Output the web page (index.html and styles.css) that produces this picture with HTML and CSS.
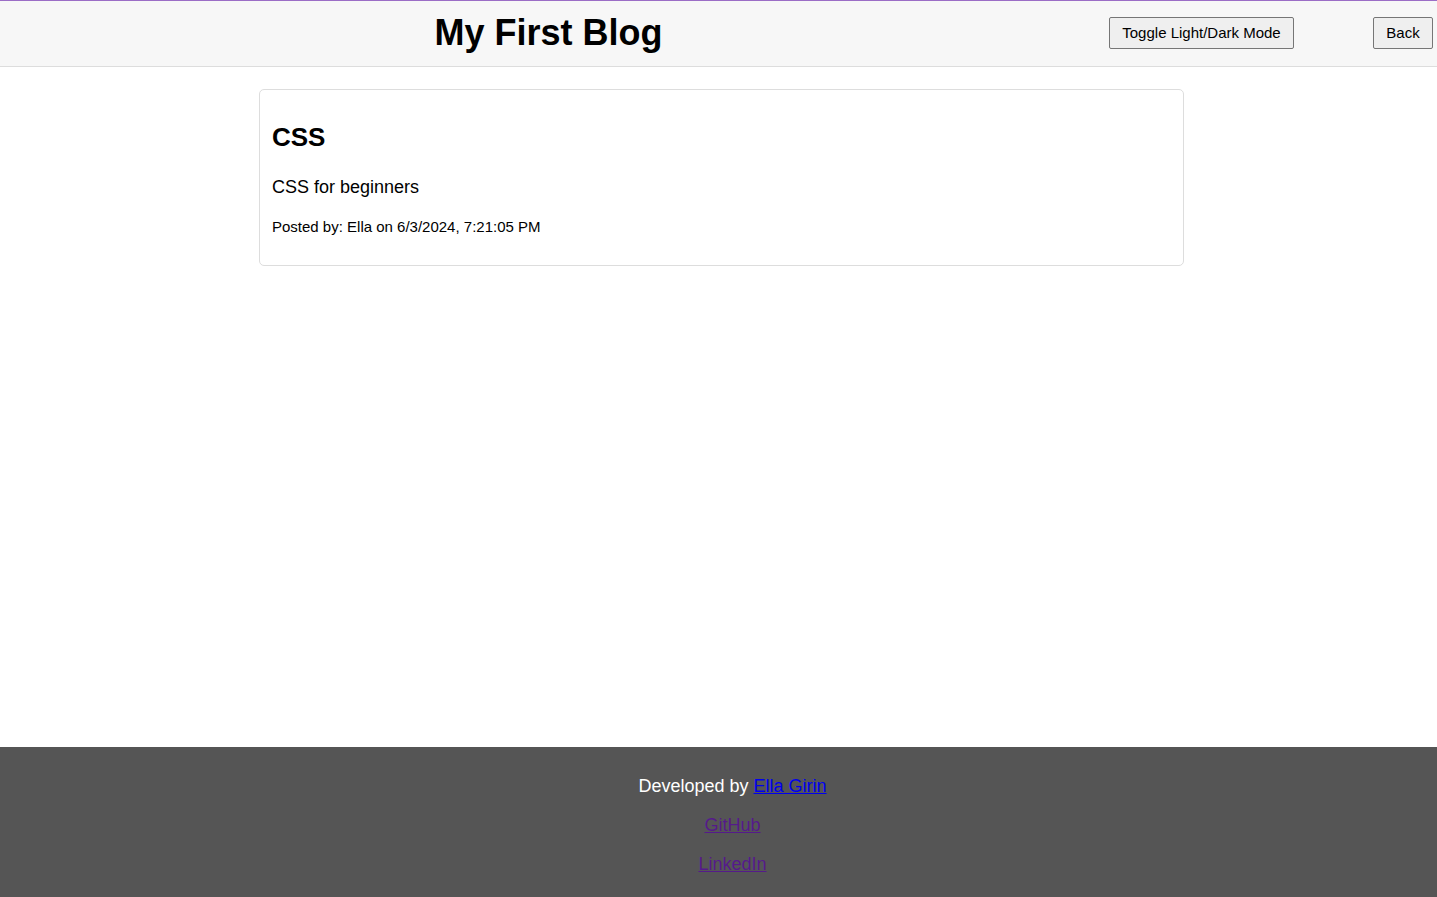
FILE: index.html
```html
<!DOCTYPE html>
<html lang="en">
<head>
<meta charset="utf-8">
<title>My First Blog</title>
<link rel="stylesheet" href="styles.css">
</head>
<body>
<header class="site-header">
  <h1 class="site-title">My First Blog</h1>
  <button class="btn btn-toggle" type="button">Toggle Light/Dark Mode</button>
  <button class="btn btn-back" type="button">Back</button>
</header>
<main class="main">
  <article class="post-card">
    <h2 class="post-title">CSS</h2>
    <p class="post-desc">CSS for beginners</p>
    <p class="post-meta">Posted by: Ella on 6/3/2024, 7:21:05 PM</p>
  </article>
</main>
<footer class="site-footer">
  <p class="footer-line">Developed by <a class="link-new" href="#">Ella Girin</a></p>
  <p class="footer-line"><a class="link-visited" href="#">GitHub</a></p>
  <p class="footer-line"><a class="link-visited" href="#">LinkedIn</a></p>
</footer>
</body>
</html>
```

FILE: styles.css
```css
html, body {
  margin: 0;
  padding: 0;
}

body {
  font-family: "Liberation Sans", Arial, sans-serif;
  color: #000;
  background: #fff;
  min-height: 100vh;
  display: flex;
  flex-direction: column;
  overflow: hidden;
}

.site-header {
  display: flex;
  align-items: center;
  height: 64px;
  background: #f7f7f7;
  border-top: 1px solid #9b6dc6;
  border-bottom: 1px solid #dddddd;
  padding: 0 4px 1px 0;
}

.site-title {
  flex: 1;
  margin: 0 0 1px;
  text-align: center;
  font-size: 36px;
  font-weight: bold;
  line-height: 41px;
}

.btn {
  font-family: "Liberation Sans", Arial, sans-serif;
  font-size: 15px;
  line-height: 18px;
  color: #000;
  background: #efefef;
  border: 1px solid #767676;
  border-radius: 2px;
  padding: 6px 0;
  cursor: pointer;
}

.btn-toggle {
  margin-left: 12px;
  width: 185px;
}

.btn-back {
  margin-left: 79px;
  width: 60px;
}

.main {
  flex: 1;
  padding: 22px 0 0 6px;
}

.post-card {
  box-sizing: border-box;
  width: 925px;
  margin: 0 auto;
  border: 1px solid #dddddd;
  border-radius: 5px;
  padding: 33px 12px 30px;
}

.post-title {
  margin: 0;
  font-size: 26px;
  line-height: 29px;
  font-weight: bold;
}

.post-desc {
  margin: 25px 0 0;
  font-size: 18px;
  line-height: 21px;
}

.post-meta {
  margin: 20px 0 0;
  font-size: 15px;
  line-height: 17px;
}

.site-footer {
  background: #555555;
  color: #ffffff;
  text-align: center;
  padding: 11px 0 5px 28px;
  height: 150px;
  box-sizing: border-box;
}

.footer-line {
  margin: 18px 0;
  font-size: 18px;
  line-height: 21px;
}

.link-new {
  color: #0000ee;
}

.link-visited {
  color: #551a8b;
}
```
